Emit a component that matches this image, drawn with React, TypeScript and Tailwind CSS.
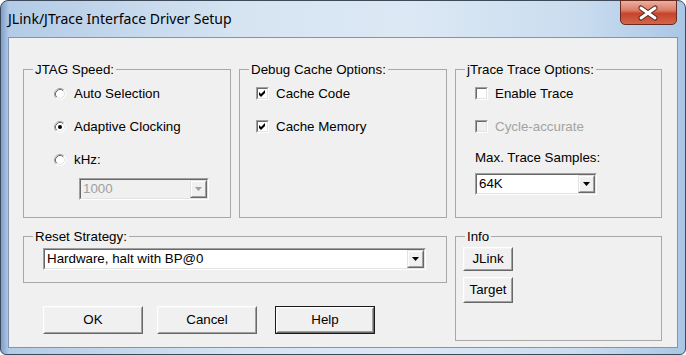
import type { ReactNode } from "react";

const Radio = ({ checked }: { checked?: boolean }) => (
  <svg width="12" height="12" viewBox="0 0 12 12" className="shrink-0">
    <circle cx="6" cy="6" r="5.5" fill="#fff" />
    <path d="M2.11 9.89 A5.5 5.5 0 0 1 9.89 2.11" fill="none" stroke="#a0a0a0" />
    <path d="M9.89 2.11 A5.5 5.5 0 0 1 2.11 9.89" fill="none" stroke="#ffffff" />
    <path d="M2.82 9.18 A4.5 4.5 0 0 1 9.18 2.82" fill="none" stroke="#696969" />
    <path d="M9.18 2.82 A4.5 4.5 0 0 1 2.82 9.18" fill="none" stroke="#e3e3e3" />
    {checked && <circle cx="6" cy="6" r="2" fill="#000" />}
  </svg>
);

const Check = ({ checked, disabled }: { checked?: boolean; disabled?: boolean }) => (
  <span className="flex w-[13px] h-[13px] shrink-0 border border-t-[#a0a0a0] border-l-[#a0a0a0] border-b-white border-r-white">
    <span
      className={`flex flex-1 items-center justify-center border border-t-[#696969] border-l-[#696969] border-b-[#e3e3e3] border-r-[#e3e3e3] ${
        disabled ? "bg-[#f0f0f0]" : "bg-white"
      }`}
    >
      {checked && (
        <svg width="7" height="7" viewBox="0 0 7 7">
          <path d="M0 2 L2 4 L6 0 L6 3 L2 7 L0 5 Z" fill="#000" />
        </svg>
      )}
    </span>
  </span>
);

const Combo = ({
  value,
  disabled,
  className,
}: {
  value: string;
  disabled?: boolean;
  className?: string;
}) => (
  <div
    className={`flex h-[22px] border border-t-[#a0a0a0] border-l-[#a0a0a0] border-b-white border-r-white ${className}`}
  >
    <div
      className={`flex flex-1 border border-t-[#696969] border-l-[#696969] border-b-[#e3e3e3] border-r-[#e3e3e3] ${
        disabled ? "bg-[#f0f0f0]" : "bg-white"
      }`}
    >
      <span className={`flex flex-1 items-center pl-[2px] ${disabled ? "text-[#a0a0a0]" : "text-black"}`}>
        {value}
      </span>
      <span className="flex w-[17px] border border-t-[#e3e3e3] border-l-[#e3e3e3] border-b-[#696969] border-r-[#696969]">
        <span className="flex flex-1 items-center justify-center bg-[#f0f0f0] border border-t-white border-l-white border-b-[#a0a0a0] border-r-[#a0a0a0]">
          <svg width="7" height="4" viewBox="0 0 7 4">
            <path d="M0 0 H7 L3.5 4 Z" fill={disabled ? "#a0a0a0" : "#000"} />
          </svg>
        </span>
      </span>
    </div>
  </div>
);

const Btn = ({ children, className, main }: { children: ReactNode; className?: string; main?: boolean }) => (
  <button className={`flex ${main ? "border border-[#1a1a1a]" : ""} ${className}`}>
    <span className="flex flex-1 border border-t-white border-l-white border-b-[#696969] border-r-[#696969]">
      <span className="flex flex-1 items-center justify-center bg-[#f0f0f0] border border-t-[#f4f4f4] border-l-[#f4f4f4] border-b-[#a0a0a0] border-r-[#a0a0a0]">
        {children}
      </span>
    </span>
  </button>
);

const Group = ({ title, className, children }: { title: string; className?: string; children?: ReactNode }) => (
  <fieldset className={`border border-[#a8a8a8] ${className}`}>
    <legend className="ml-[9px] px-[2px] leading-[15px]">{title}</legend>
    {children}
  </fieldset>
);

const RadioRow = ({ label, checked }: { label: string; checked?: boolean }) => (
  <div className="flex h-[33px] items-center gap-[8px]">
    <Radio checked={checked} />
    <span>{label}</span>
  </div>
);

const CheckRow = ({ label, checked, disabled }: { label: string; checked?: boolean; disabled?: boolean }) => (
  <div className="flex h-[33px] items-center gap-[7px]">
    <Check checked={checked} disabled={disabled} />
    <span className={disabled ? "text-[#a3a3a3]" : ""}>{label}</span>
  </div>
);

export default function App() {
  return (
    <div className="w-[686px] h-[355px] bg-white">
      <div className="flex flex-col w-full h-full rounded-t-[8px] rounded-b-[6px] border border-[#3d4a5a] bg-[linear-gradient(90deg,#7f9fcb_0px,#b3cbe6_8px,#d6e4f2_35%,#dce8f4_60%,#c9dcef_85%,#aac6e6)] px-[7px] pb-[6px]">
        {/* title bar */}
        <div className="flex h-[36px] shrink-0 items-start justify-between">
          <div className="flex h-full items-center pb-[1px] font-['Noto_Sans',sans-serif] text-[14px] text-black">
            JLink/JTrace Interface Driver Setup
          </div>
          <div className="relative mt-[-1px] mr-[1px] h-[25px] w-[57px] rounded-b-[5px] border border-[#6b2a20] bg-[linear-gradient(180deg,#eab1a2_0%,#dc7d66_40%,#c6442a_55%,#d3664b_100%)]">
            <svg width="57" height="25" viewBox="0 0 57 25" className="absolute left-[-1px] top-[-1px]">
              <path d="M21 8 L35 18 M35 8 L21 18" stroke="#5a2a22" strokeWidth="5" strokeLinecap="round" />
              <path d="M21 8 L35 18 M35 8 L21 18" stroke="#fff" strokeWidth="3" strokeLinecap="round" />
            </svg>
          </div>
        </div>

        {/* client area */}
        <div className="flex flex-1 flex-col border border-[#8295ad] bg-[#f0f0f0] pl-[14px] pt-[24px] font-['Liberation_Sans',Arial,sans-serif] text-[13.33px] text-black">
          <div className="flex gap-[8px]">
            <Group title="JTAG Speed:" className="h-[156px] w-[208px]">
              <div className="pl-[30px]">
                <RadioRow label="Auto Selection" />
                <RadioRow label="Adaptive Clocking" checked />
                <RadioRow label="kHz:" />
                <Combo value="1000" disabled className="ml-[25px] mt-[2px] w-[130px]" />
              </div>
            </Group>
            <Group title="Debug Cache Options:" className="h-[156px] w-[208px]">
              <div className="pl-[16px]">
                <CheckRow label="Cache Code" checked />
                <CheckRow label="Cache Memory" checked />
              </div>
            </Group>
            <Group title="jTrace Trace Options:" className="h-[156px] w-[207px]">
              <div className="pl-[19px]">
                <CheckRow label="Enable Trace" />
                <CheckRow label="Cycle-accurate" disabled />
                <div className="flex h-[30px] items-center">Max. Trace Samples:</div>
                <Combo value="64K" className="w-[122px]" />
              </div>
            </Group>
          </div>

          <div className="mt-[11px] flex gap-[8px]">
            <div className="flex w-[424px] flex-col">
              <Group title="Reset Strategy:" className="h-[54px] w-[424px]">
                <Combo value="Hardware, halt with BP@0" className="ml-[19px] mt-[4px] w-[383px]" />
              </Group>
              <div className="ml-[20px] mt-[23px] flex">
                <Btn className="h-[28px] w-[100px]">OK</Btn>
                <Btn className="ml-[14px] h-[28px] w-[100px]">Cancel</Btn>
                <Btn main className="ml-[18px] h-[28px] w-[100px]">
                  Help
                </Btn>
              </div>
            </div>
            <Group title="Info" className="h-[112px] w-[207px]">
              <div className="flex flex-col gap-[6px] pl-[7px] pt-[3px]">
                <Btn className="h-[24px] w-[50px]">JLink</Btn>
                <Btn className="h-[26px] w-[50px]">Target</Btn>
              </div>
            </Group>
          </div>
        </div>
      </div>
    </div>
  );
}
